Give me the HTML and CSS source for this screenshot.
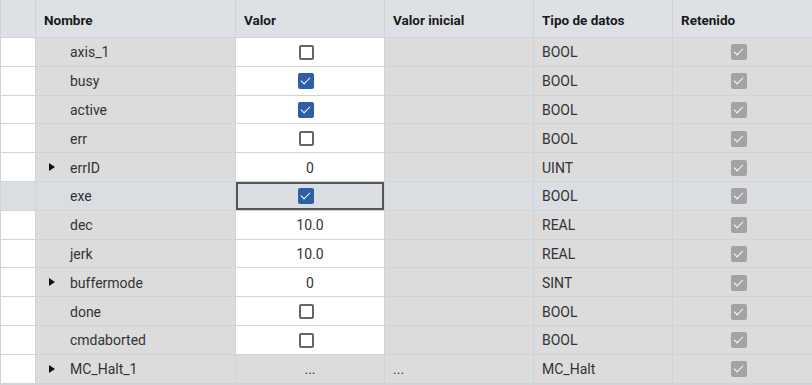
FILE: index.html
```html
<!DOCTYPE html>
<html lang="es">
<head>
    <meta charset="UTF-8">
    <title>Variables</title>
    <link rel="stylesheet" href="styles.css">
</head>
<body>
    <div class="grid">
        <!-- header -->
        <div class="hd"></div>
        <div class="hd">Nombre</div>
        <div class="hd">Valor</div>
        <div class="hd">Valor inicial</div>
        <div class="hd">Tipo de datos</div>
        <div class="hd">Retenido</div>

        <div class="sel"></div>
        <div class="name">axis_1</div>
        <div class="val"><span class="cb"></span></div>
        <div class="cell"></div>
        <div class="cell">BOOL</div>
        <div class="cell ret"><span class="cb grey"></span></div>

        <div class="sel"></div>
        <div class="name">busy</div>
        <div class="val"><span class="cb on"></span></div>
        <div class="cell"></div>
        <div class="cell">BOOL</div>
        <div class="cell ret"><span class="cb grey"></span></div>

        <div class="sel"></div>
        <div class="name">active</div>
        <div class="val"><span class="cb on"></span></div>
        <div class="cell"></div>
        <div class="cell">BOOL</div>
        <div class="cell ret"><span class="cb grey"></span></div>

        <div class="sel"></div>
        <div class="name">err</div>
        <div class="val"><span class="cb"></span></div>
        <div class="cell"></div>
        <div class="cell">BOOL</div>
        <div class="cell ret"><span class="cb grey"></span></div>

        <div class="sel"></div>
        <div class="name"><span class="arrow"></span>errID</div>
        <div class="val num">0</div>
        <div class="cell"></div>
        <div class="cell">UINT</div>
        <div class="cell ret"><span class="cb grey"></span></div>

        <div class="sel active"></div>
        <div class="name active">exe</div>
        <div class="val active focus"><span class="cb on"></span></div>
        <div class="cell active"></div>
        <div class="cell active">BOOL</div>
        <div class="cell ret active"><span class="cb grey"></span></div>

        <div class="sel"></div>
        <div class="name">dec</div>
        <div class="val num">10.0</div>
        <div class="cell"></div>
        <div class="cell">REAL</div>
        <div class="cell ret"><span class="cb grey"></span></div>

        <div class="sel"></div>
        <div class="name">jerk</div>
        <div class="val num">10.0</div>
        <div class="cell"></div>
        <div class="cell">REAL</div>
        <div class="cell ret"><span class="cb grey"></span></div>

        <div class="sel"></div>
        <div class="name"><span class="arrow"></span>buffermode</div>
        <div class="val num">0</div>
        <div class="cell"></div>
        <div class="cell">SINT</div>
        <div class="cell ret"><span class="cb grey"></span></div>

        <div class="sel"></div>
        <div class="name">done</div>
        <div class="val"><span class="cb"></span></div>
        <div class="cell"></div>
        <div class="cell">BOOL</div>
        <div class="cell ret"><span class="cb grey"></span></div>

        <div class="sel"></div>
        <div class="name">cmdaborted</div>
        <div class="val"><span class="cb"></span></div>
        <div class="cell"></div>
        <div class="cell">BOOL</div>
        <div class="cell ret"><span class="cb grey"></span></div>

        <div class="sel"></div>
        <div class="name"><span class="arrow"></span>MC_Halt_1</div>
        <div class="cell num">...</div>
        <div class="cell">...</div>
        <div class="cell">MC_Halt</div>
        <div class="cell ret"><span class="cb grey"></span></div>
    </div>
</body>
</html>
```

FILE: styles.css
```css
* {
    box-sizing: border-box;
}

body {
    margin: 0;
    font-family: Roboto, 'Liberation Sans', sans-serif;
    font-size: 14px;
    color: #333;
    background: #fff;
}

.grid {
    display: grid;
    grid-template-columns: 34px 199px 148px 148px 138px 1fr;
    grid-template-rows: 37px;
    grid-auto-rows: 27.8px;
    gap: 1px;
    background: #d0d4d8;
    border-left: 1px solid #d0d4d8;
    height: 385px;
    overflow: hidden;
}

.grid > div {
    display: flex;
    align-items: center;
    padding-left: 8px;
    padding-top: 1px;
    white-space: nowrap;
}

/* Header */
.grid > .hd {
    background: #dde1e5;
    font-size: 13.5px;
    font-weight: bold;
    color: #1a1a1a;
    padding-top: 2px;
}

.sel {
    background: #fff;
}

.name {
    background: #dcdcdc;
    position: relative;
}

.grid > .name {
    padding-left: 34px;
}

.arrow {
    position: absolute;
    left: 13px;
    top: 50%;
    margin-top: -4px;
    border-left: 6px solid #111;
    border-top: 4px solid transparent;
    border-bottom: 4px solid transparent;
}

.val {
    background: #fff;
}

.cell {
    background: #dcdcdc;
}

.grid > .val,
.grid > .ret,
.grid > .num {
    justify-content: center;
    padding-left: 0;
}

/* checkboxes sit a little left of centre */
.grid > .val,
.grid > .ret {
    padding-right: 8px;
}

.grid > .num {
    padding-right: 0;
}

.grid > .active {
    background: #dadee2;
}

.focus {
    box-shadow: inset 0 0 0 2px #555;
}

/* Checkboxes */
.cb {
    display: inline-block;
    width: 15px;
    height: 15px;
    border: 2px solid #666;
    border-radius: 2px;
    background: #fff;
    position: relative;
}

.cb.on,
.cb.grey {
    border: none;
    width: 16px;
    height: 16px;
}

.cb.on {
    background: #2c5fa6;
}

.cb.grey {
    background: #a3a3a3;
}

.cb.on::after,
.cb.grey::after {
    content: "";
    position: absolute;
    left: 5px;
    top: 2px;
    width: 4px;
    height: 8px;
    border-right: 1.5px solid #fff;
    border-bottom: 1.5px solid #fff;
    transform: rotate(45deg);
}
```
